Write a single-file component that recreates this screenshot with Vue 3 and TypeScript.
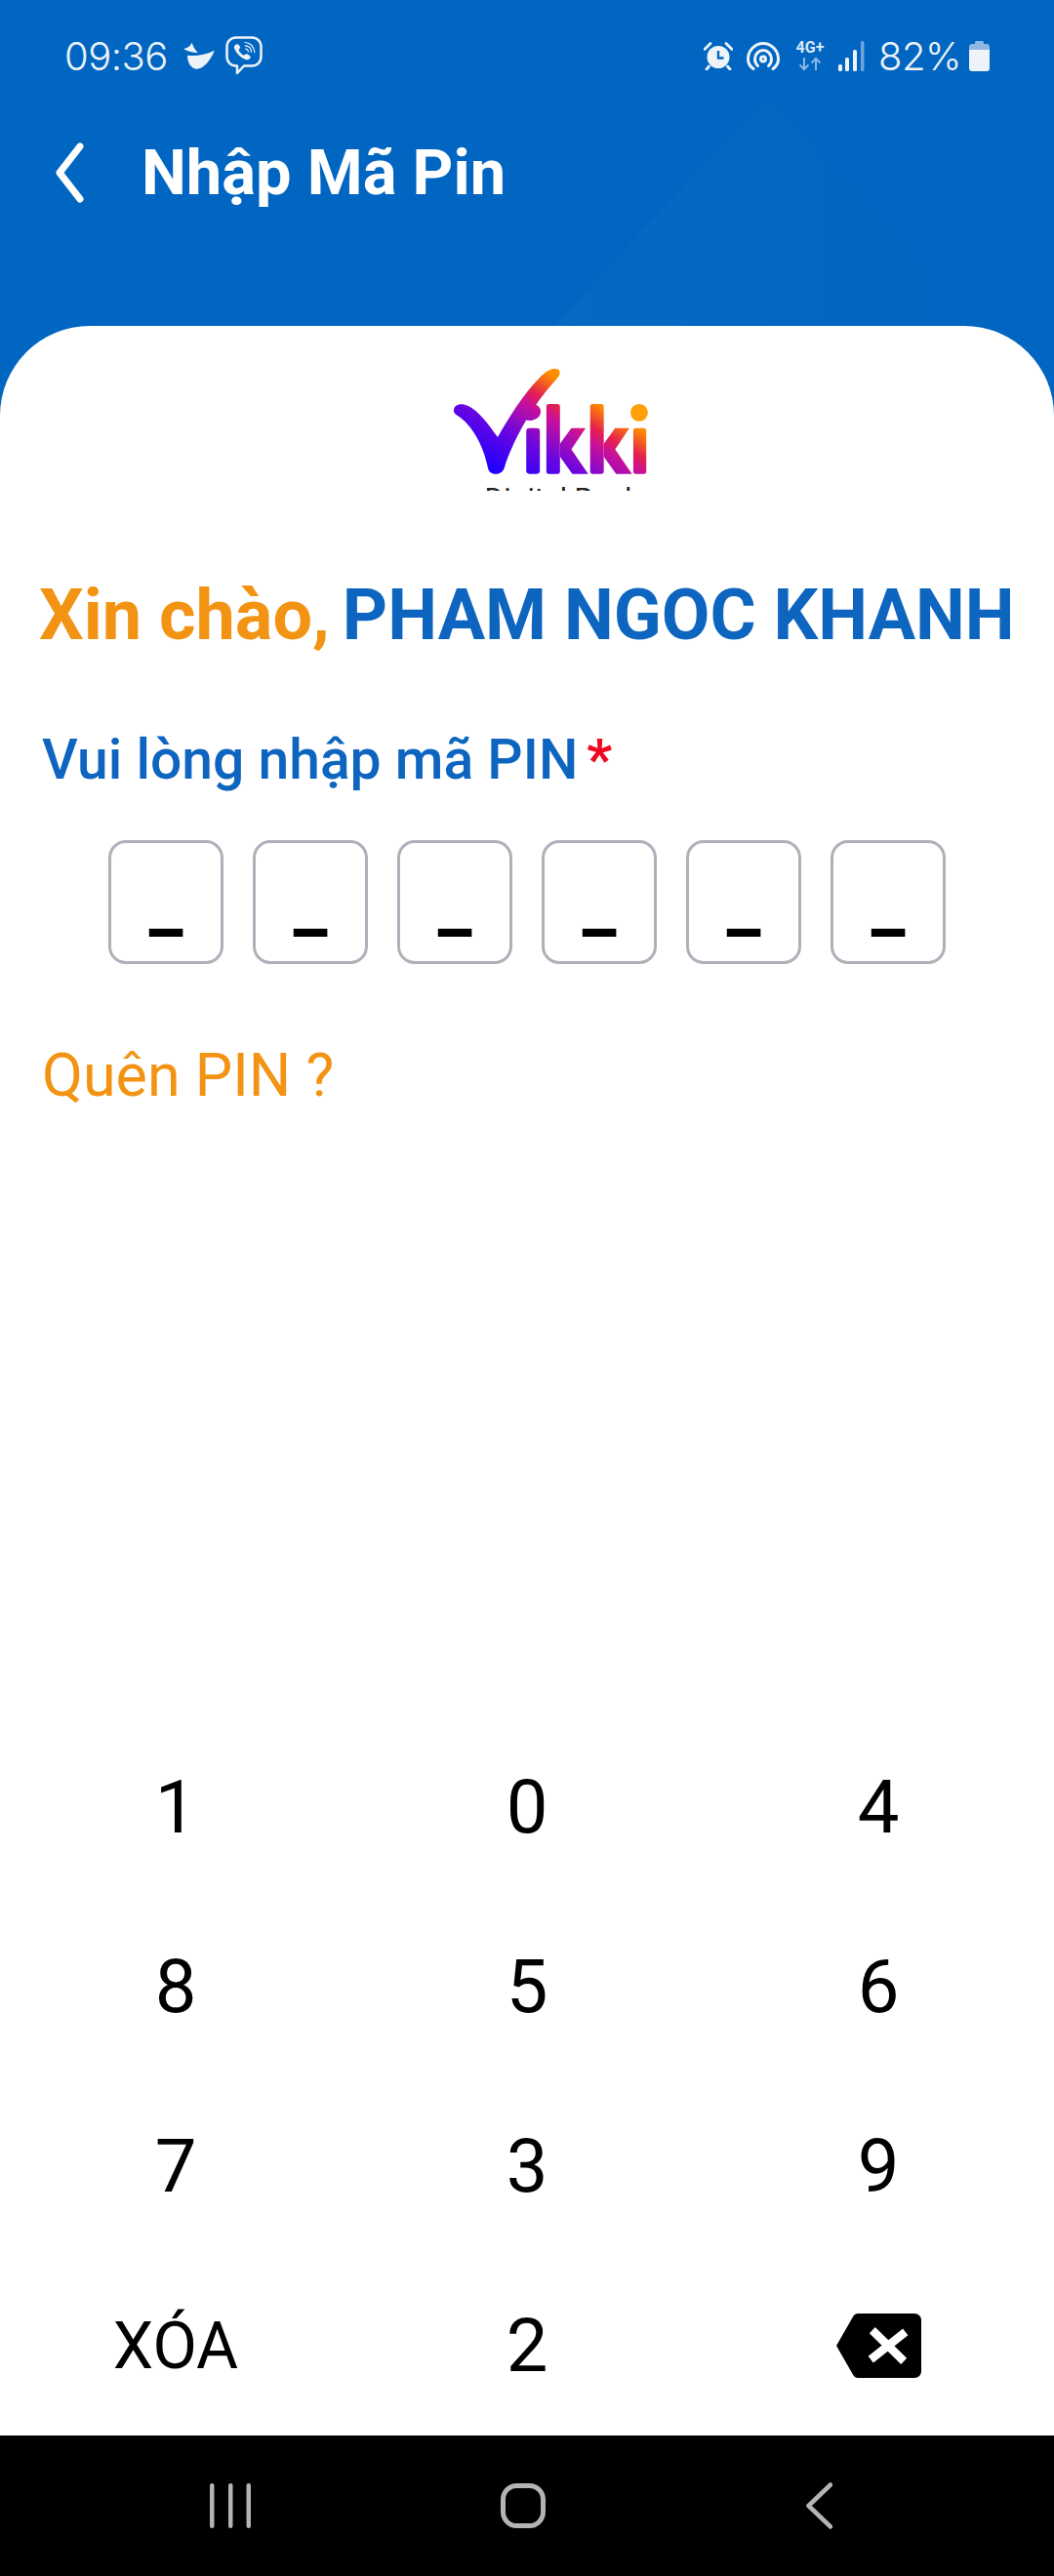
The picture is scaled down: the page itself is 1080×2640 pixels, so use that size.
<template>
  <div class="screen">
    <header class="top">
      <div class="top__shine" />
      <div class="status">
        <div class="status__group">
          <span class="status__text">09:36</span>
          <svg class="ic-bird" viewBox="540 125 105 90" width="35" height="30">
            <path d="M546 149C558 147 568 140 572 130C576 142 582 153 591 161C575 161 558 157 546 149Z" fill="#eef3fa" />
            <path d="M558 169C582 173 612 168 641 154C631 184 606 212 586 211C568 209 558 190 558 169Z" fill="#eef3fa" />
          </svg>
          <svg class="ic-viber" viewBox="0 0 38 40" width="38" height="40" fill="none" stroke="#eef3fa">
            <path d="M11 1.500H27C32.500 1.500 36.500 5.500 36.500 11V21C36.500 26.500 32.500 30.500 27 30.500H19L12 38V30.500H11C5.500 30.500 1.500 26.500 1.500 21V11C1.500 5.500 5.500 1.500 11 1.500Z" stroke-width="2.500" stroke-linejoin="round" />
            <path d="M11 8.500C9 9.500 8.500 11.500 9.500 13.500C11.500 18 15.500 22 20.500 24C22.500 24.800 24.500 24 25.500 22.300C26 21.300 25.500 20.500 24.800 20L22.500 18.500C21.500 17.900 20.700 18.200 20 19C19.500 19.700 18.800 19.800 18 19.300C16.300 18.200 14.800 16.600 13.900 15C13.500 14.200 13.700 13.600 14.300 13.100C15.100 12.400 15.300 11.600 14.800 10.700L13.500 8.800C12.900 8 12 8 11 8.500Z" fill="#eef3fa" stroke="none" />
            <path d="M20 6.500C25.500 6.800 29.500 10.800 29.800 16.500M20.300 9.800C23.800 10 26.300 12.600 26.500 16.200M20.600 13C22.200 13.200 23.200 14.200 23.400 15.800" stroke-width="1.200" stroke-linecap="round" />
          </svg>
        </div>
        <div class="status__group status__group--right">
          <svg class="ic-alarm" viewBox="0 0 30 29" width="30" height="29">
            <circle cx="15" cy="15.500" r="11.500" fill="#eef3fa" />
            <path d="M1 7.500L7 1.500M29 7.500L23 1.500M5.500 25L3 28M24.500 25L27 28" stroke="#eef3fa" stroke-width="2.800" stroke-linecap="round" />
            <path d="M15 9V16.500H20.500" fill="none" stroke="#0066c1" stroke-width="2.400" />
          </svg>
          <svg class="ic-hotspot" viewBox="0 0 34 29" width="34" height="29" fill="none" stroke="#eef3fa" stroke-width="3" stroke-linecap="round">
            <path d="M7 27.500C2.500 24.500 1.500 20.500 1.500 17.500C1.500 9 8.500 1.500 17 1.500C25.500 1.500 32.500 9 32.500 17.500C32.500 20.500 31.500 24.500 27 27.500" />
            <path d="M11.500 24.500C9.500 22.500 8.500 20 8.500 17.500C8.500 12.500 12.500 8.500 17 8.500C21.500 8.500 25.500 12.500 25.500 17.500C25.500 20 24.500 22.500 22.500 24.500" />
            <circle cx="17" cy="17.500" r="2.500" />
          </svg>
          <div class="net">
            <span class="net__label">4G+</span>
            <svg viewBox="0 0 24 15" width="24" height="15" fill="none" stroke="#8db8e6" stroke-width="2">
              <path d="M6 1V13M1.500 8.500L6 13L10.500 8.500M18 14V2M13.500 6.500L18 2L22.500 6.500" />
            </svg>
          </div>
          <svg class="ic-signal" viewBox="0 0 28 31" width="28" height="31">
            <rect x="1" y="24" width="4" height="7" rx="1.500" fill="#eef3fa" />
            <rect x="8" y="17" width="4" height="14" rx="1.500" fill="#eef3fa" />
            <rect x="16" y="9" width="4" height="22" rx="1.500" fill="#eef3fa" />
            <rect x="24" y="0" width="3.500" height="31" rx="1.500" fill="#6fa3dc" />
          </svg>
          <span class="status__text status__text--pct">82%</span>
          <svg class="ic-battery" viewBox="0 0 21 31" width="21" height="31">
            <path d="M6 3V1.500C6 .700 6.700 0 7.500 0H13.500C14.300 0 15 .700 15 1.500V3H18C19.700 3 21 4.300 21 6V9H0V6C0 4.300 1.300 3 3 3Z" fill="#8db8e6" />
            <path d="M0 9H21V28C21 29.700 19.700 31 18 31H3C1.300 31 0 29.700 0 28Z" fill="#eef3fa" />
          </svg>
        </div>
      </div>
      <div class="titlebar">
        <button class="titlebar__back" aria-label="Back">
          <svg viewBox="0 0 30 62" width="30" height="62" fill="none" stroke="#fff" stroke-width="7" stroke-linecap="round" stroke-linejoin="round">
            <path d="M25 4L4 31L25 58" />
          </svg>
        </button>
        <h1 class="titlebar__text">Nhập Mã Pin</h1>
      </div>
    </header>

    <main class="card">
      <div class="logo">
        <svg class="logo__mark" viewBox="130 105 605 340" width="202" height="113">
          <defs>
            <linearGradient id="vikki" gradientUnits="userSpaceOnUse" x1="270" y1="430" x2="483" y2="79">
              <stop offset="0" stop-color="#2200ff" />
              <stop offset="0.3" stop-color="#6a06e0" />
              <stop offset="0.55" stop-color="#c8109a" />
              <stop offset="0.65" stop-color="#e4204e" />
              <stop offset="0.82" stop-color="#ff8a00" />
              <stop offset="1" stop-color="#ff9f0a" />
            </linearGradient>
          </defs>
          <g fill="url(#vikki)">
            <path d="M135 240C135 228 150 220 165 224C205 232 245 290 270 325C300 270 350 190 400 140C420 120 440 108 455 115C466 122 462 135 452 145C425 175 405 200 388 225C400 228 408 245 398 260C390 272 370 276 358 272C335 310 305 370 290 420C285 435 270 440 258 438C245 436 240 425 238 412C225 350 190 285 145 258C135 250 133 245 135 240Z" />
            <rect x="358" y="297" width="42" height="141" rx="10" />
            <rect x="420" y="222" width="42" height="216" rx="8" />
            <path d="M462 345L497 297H541L497 362L549 438H500L462 385Z" />
            <rect x="555" y="222" width="42" height="216" rx="8" />
            <path d="M597 345L632 297H676L632 362L684 438H635L597 385Z" />
            <rect x="688" y="297" width="40" height="141" rx="8" />
          </g>
          <circle cx="706" cy="249" r="27" fill="#ff9f0a" />
        </svg>
        <div class="logo__sub">Digital Bank</div>
      </div>

      <p class="greeting">
        <span class="greeting__hello">Xin chào,</span>
        <span class="greeting__name">PHAM NGOC KHANH</span>
      </p>

      <p class="label">Vui lòng nhập mã PIN<span class="label__star">*</span></p>

      <div class="pin">
        <div v-for="(slot, i) in slots" :key="i" class="pin__box">{{ slot }}</div>
      </div>

      <a class="forgot">Quên PIN ?</a>

      <div class="keypad">
        <button v-for="key in keys" :key="key" class="keypad__key" :class="{ 'keypad__key--text': key === 'XÓA' }" @click="press(key)">
          <svg v-if="key === 'back'" viewBox="0 0 87 66" width="87" height="66">
            <path d="M22 0H80C84 0 87 3 87 7V59C87 63 84 66 80 66H22C20 66 18.500 65 17.500 63.500L0 33L17.500 2.500C18.500 1 20 0 22 0Z" fill="#000" />
            <path d="M36 18L70 48M70 18L36 48" stroke="#fff" stroke-width="8.500" transform="rotate(3 53 33)" />
          </svg>
          <template v-else>{{ key }}</template>
        </button>
      </div>
    </main>

    <nav class="navbar">
      <svg viewBox="0 0 42 46" width="42" height="46" fill="#b4b4b4">
        <rect x="0" y="0" width="4.500" height="46" rx="2.200" />
        <rect x="19" y="0" width="4.500" height="46" rx="2.200" />
        <rect x="37.500" y="0" width="4.500" height="46" rx="2.200" />
      </svg>
      <svg viewBox="0 0 46 46" width="46" height="46" fill="none" stroke="#b4b4b4" stroke-width="5">
        <rect x="2.500" y="2.500" width="41" height="41" rx="14" />
      </svg>
      <svg class="navbar__back" viewBox="0 0 27 48" width="27" height="48" fill="none" stroke="#b4b4b4" stroke-width="4.500" stroke-linecap="round" stroke-linejoin="round">
        <path d="M25 2.500L2.500 24L25 45.500" />
      </svg>
    </nav>
  </div>
</template>

<script setup lang="ts">
import { computed, ref } from 'vue';

const keys = ['1', '0', '4', '8', '5', '6', '7', '3', '9', 'XÓA', '2', 'back'];

const pin = ref('');

// Every empty position shows an underscore, typed digits replace it
const slots = computed(() => Array.from({ length: 6 }, (_, i) => pin.value[i] ?? '_'));

function press(key: string) {
  if (key === 'XÓA') {
    pin.value = '';
  } else if (key === 'back') {
    pin.value = pin.value.slice(0, -1);
  } else if (pin.value.length < 6) {
    pin.value += key;
  }
}
</script>

<style>
html,
body {
  margin: 0;
  background: #000;
}
</style>

<style scoped>
.screen {
  position: relative;
  display: flex;
  flex-direction: column;
  width: 1080px;
  height: 2640px;
  overflow: hidden;
  background: #0066c1;
  font-family: Roboto, "Liberation Sans", sans-serif;
}

.top {
  position: relative;
  flex: none;
  height: 334px;
  box-sizing: border-box;
  padding-top: 35px;
}

.top__shine {
  position: absolute;
  left: 567px;
  top: 100px;
  width: 440px;
  height: 234px;
  background: linear-gradient(90deg, rgba(255, 255, 255, 0.025), rgba(255, 255, 255, 0.008) 70%, rgba(255, 255, 255, 0));
  clip-path: polygon(0 100%, 50% 0, 100% 100%);
}

.status {
  position: relative;
  display: flex;
  justify-content: space-between;
  align-items: center;
  height: 44px;
  padding: 0 66px;
}

.status__group {
  display: flex;
  align-items: center;
  gap: 10px;
}

.status__group--right {
  gap: 14px;
}

.status__text {
  font-family: Inter, Roboto, sans-serif;
  font-size: 40px;
  font-weight: 300;
  color: #eef3fa;
  letter-spacing: -0.5px;
}

.status__text--pct {
  margin-right: -6px;
}

.ic-bird {
  margin-left: 4px;
}

.net {
  display: flex;
  flex-direction: column;
  align-items: center;
  gap: 2px;
  width: 34px;
  margin-right: -3px;
}

.net__label {
  font-size: 16px;
  line-height: 14px;
  font-weight: 700;
  color: #dbe8f6;
}

.titlebar {
  position: relative;
  display: flex;
  align-items: center;
  height: 100px;
  margin-top: 48px;
  padding-left: 57px;
}

.titlebar__back {
  display: flex;
  padding: 0;
  border: none;
  background: none;
}

.titlebar__text {
  margin: 0 0 0 58px;
  font-size: 65px;
  font-weight: 700;
  color: #fff;
}

.card {
  flex: 1;
  display: flex;
  flex-direction: column;
  min-height: 0;
  padding-top: 41px;
  background: #fff;
  border-radius: 92px 92px 0 0;
}

.logo {
  align-self: center;
  width: 202px;
  height: 128px;
  margin-left: 48px;
  overflow: hidden;
}

.logo__mark {
  display: block;
}

.logo__sub {
  margin-top: 6px;
  padding-left: 24px;
  font-size: 30px;
  line-height: 34px;
  text-align: center;
  white-space: nowrap;
  color: #222;
}

.greeting {
  display: flex;
  gap: 13px;
  margin: 85px 0 0;
  padding-left: 40px;
  font-size: 72px;
  line-height: 86px;
  font-weight: 700;
  white-space: nowrap;
}

.greeting__hello {
  color: #f39314;
}

.greeting__name {
  color: #0e65bf;
}

.label {
  margin: 70px 0 0;
  padding-left: 43px;
  font-size: 57px;
  line-height: 70px;
  font-weight: 500;
  color: #0e65bf;
}

.label__star {
  margin-left: 9px;
  font-weight: 700;
  color: #f0081e;
}

.pin {
  display: flex;
  justify-content: center;
  gap: 30px;
  margin-top: 47px;
}

.pin__box {
  display: flex;
  justify-content: center;
  align-items: flex-end;
  box-sizing: border-box;
  width: 118px;
  height: 127px;
  border: 3px solid #b0b0ba;
  border-radius: 18px;
  padding-bottom: 29px;
  font-size: 78px;
  line-height: 60px;
  font-weight: 700;
  color: #000;
}

.forgot {
  margin-top: 79px;
  padding-left: 43px;
  font-size: 61px;
  line-height: 70px;
  color: #f39314;
}

.keypad {
  display: grid;
  grid-template-columns: repeat(3, 1fr);
  grid-auto-rows: 184px;
  margin-top: auto;
}

.keypad__key {
  display: flex;
  justify-content: center;
  align-items: center;
  padding: 0;
  border: none;
  background: none;
  font-family: inherit;
  font-size: 76px;
  color: #000;
}

.keypad__key--text {
  font-size: 66px;
}

.navbar {
  flex: none;
  display: flex;
  align-items: center;
  gap: 256px;
  box-sizing: border-box;
  height: 144px;
  padding-left: 215px;
  background: #000;
}

.navbar__back {
  margin-left: 11px;
}
</style>
